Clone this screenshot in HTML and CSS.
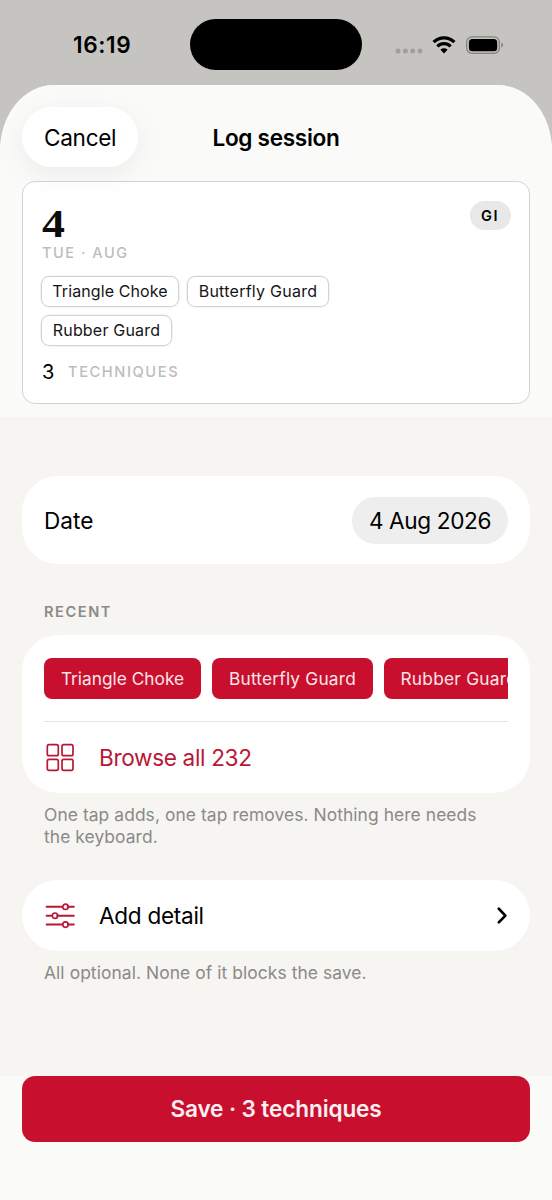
FILE: index.html
```html
<!DOCTYPE html>
<html lang="en">
<head>
<meta charset="utf-8">
<title>Log session</title>
<link rel="stylesheet" href="styles.css">
</head>
<body>
<div class="phone">
  <header class="status">
    <div class="time">16:19</div>
    <div class="island"></div>
    <div class="indicators">
      <svg width="110" height="22" viewBox="0 0 110 22">
        <g fill="#a09f9c"><circle cx="4" cy="17" r="2.5"/><circle cx="11.4" cy="17" r="2.5"/><circle cx="18.7" cy="17" r="2.5"/><circle cx="26" cy="17" r="2.5"/></g>
        <g fill="none" stroke="#000" stroke-width="3.2"><path d="M39.6 8.2a14.6 14.6 0 0 1 20.8 0"/><path d="M43.4 12.5a9.2 9.2 0 0 1 13.2 0"/></g>
        <path d="M50 19.4l-3.6-3.6a5.2 5.2 0 0 1 7.2 0z"/>
        <rect x="72.6" y="2.8" width="32.8" height="16.6" rx="5.4" fill="none" stroke="#82817f" stroke-width="1.3"/>
        <rect x="74.9" y="5" width="28.3" height="12.2" rx="3.5"/>
        <path d="M107.3 8.6c2.4 1 2.4 4 0 5z" fill="#82817f"/>
      </svg>
    </div>
  </header>
  <main class="sheet">
    <section class="top">
      <div class="navbar">
        <div class="cancel"><span class="t-cancel">Cancel</span></div>
        <h1 class="title"><span class="t-title">Log session</span></h1>
      </div>
      <article class="card">
        <div class="card-head">
          <div class="day">4</div>
          <div class="badge"><span class="t-gi">GI</span></div>
        </div>
        <div class="month"><span class="t-month">TUE · AUG</span></div>
        <div class="chips">
          <div class="chip"><span>Triangle Choke</span></div>
          <div class="chip chip-butterfly"><span>Butterfly Guard</span></div>
          <div class="chip chip-rubber"><span>Rubber Guard</span></div>
        </div>
        <div class="count"><b>3</b><span class="t-tech">TECHNIQUES</span></div>
      </article>
    </section>
    <section class="form">
      <div class="group date-row">
        <span class="t-date">Date</span>
        <div class="date-pill"><span class="t-pill">4 Aug 2026</span></div>
      </div>
      <h2 class="label"><span class="t-recent">RECENT</span></h2>
      <div class="group recent">
        <div class="tags">
          <div class="tag"><span>Triangle Choke</span></div>
          <div class="tag tag-butterfly"><span>Butterfly Guard</span></div>
          <div class="tag tag-rubber"><span>Rubber Guard</span></div>
        </div>
        <div class="browse">
          <svg class="row-icon" width="32" height="32" viewBox="0 0 32 32" fill="none" stroke="#b91736" stroke-width="1.7">
            <rect x="3.3" y="2.7" width="11" height="11" rx="1.8"/><rect x="18" y="2.7" width="11" height="11" rx="1.8"/>
            <rect x="3.3" y="17.4" width="11" height="11" rx="1.8"/><rect x="18" y="17.4" width="11" height="11" rx="1.8"/>
          </svg>
          <span class="t-browse">Browse all 232</span>
        </div>
      </div>
      <p class="note"><span class="t-note1">One tap adds, one tap removes. Nothing here needs</span><br><span class="t-note2">the keyboard.</span></p>
      <div class="group detail">
        <svg class="row-icon" width="32" height="32" viewBox="0 0 32 32" fill="none" stroke="#b91736" stroke-width="2" stroke-linecap="round">
          <path d="M2.6 6.8h15.2M23.8 6.8h6M2.6 15.7h4.6M13.2 15.7h16.6M2.6 24.6h15.2M23.8 24.6h6"/>
          <g stroke-width="1.7"><circle cx="21.5" cy="6.8" r="2.7"/><circle cx="11" cy="15.7" r="2.7"/><circle cx="21.5" cy="24.6" r="2.7"/></g>
        </svg>
        <span class="t-detail">Add detail</span>
        <svg class="chevron" width="12" height="20" viewBox="0 0 12 20" fill="none" stroke="#000" stroke-width="2.7" stroke-linecap="round" stroke-linejoin="round"><path d="M2.8 2.8l6.6 6.8-6.6 6.8"/></svg>
      </div>
      <p class="note last"><span class="t-note3">All optional. None of it blocks the save.</span></p>
    </section>
    <footer class="bottom">
      <div class="save"><span class="t-save">Save · 3 techniques</span></div>
    </footer>
  </main>
</div>
</body>
</html>
```
FILE: styles.css
```css
* { box-sizing: border-box; }
body { margin: 0; background: #c6c4c0; color: #000; font: 22.6px/28px Inter, "Liberation Sans", sans-serif; }
span { white-space: nowrap; }
svg { display: block; flex: none; }
h1, h2, p { margin: 0; font: inherit; }
.phone { width: 552px; height: 1200px; overflow: hidden; display: flex; flex-direction: column; }

.status { height: 85px; flex: none; display: grid; grid-template-columns: 190px 172px 190px; padding-top: 19px; }
.time { padding: 12px 0 0 73px; font-size: 22.6px; font-weight: 600; letter-spacing: .6px; }
.island { height: 51px; border-radius: 26px; background: #000; }
.indicators { padding: 15px 0 0 32px; }

.sheet { flex: 1; display: flex; flex-direction: column; background: #f6f5f1; border-radius: 54px 54px 0 0 / 66px 66px 0 0; overflow: hidden; }
.top { height: 332px; flex: none; background: #fafaf8; padding: 22px 22px 0; }
.navbar { height: 60px; display: grid; grid-template-columns: 116px 1fr 116px; align-items: center; }
.cancel { height: 60px; border-radius: 30px; background: #fff; box-shadow: 0 7px 28px rgba(0,0,0,.06); display: flex; align-items: center; padding: 2px 0 0 22px; }
.title { text-align: center; font-weight: 600; padding-top: 2px; }
.t-cancel { letter-spacing: -.3px; }
.t-title { letter-spacing: -.3px; }

.card { height: 223px; margin-top: 14px; border: 1px solid #d3d3d3; border-radius: 13px; background: #fff; padding: 19px 18px 0; }
.card-head { display: flex; justify-content: space-between; height: 42px; }
.day { margin-left: 1px; font: bold 41px/44px "Liberation Serif", serif; color: #0c0c0c; transform: scaleX(1.12); transform-origin: left; }
.badge { width: 41px; height: 29px; border-radius: 15px; background: #e8e8e8; display: flex; align-items: center; padding-left: 11px; font-size: 14.6px; font-weight: 600; }
.t-gi { letter-spacing: 1.6px; }
.month { height: 20px; margin-left: 1px; font-size: 14.6px; font-weight: 500; line-height: 20px; color: #bdbdbd; }
.t-month { letter-spacing: 1.5px; }
.chips { display: flex; flex-wrap: wrap; gap: 8px; margin-top: 13px; font-size: 16px; line-height: 28px; color: #151515; letter-spacing: .1px; }
.chip { width: 138px; height: 31px; border: 1px solid #d3d3d3; border-radius: 8px; display: flex; align-items: flex-start; justify-content: center; box-shadow: 0 0 0 .3px #d8d8d8; }
.chip-butterfly { width: 142px; margin-right: 100px; letter-spacing: .26px; }
.chip-rubber { width: 131px; letter-spacing: .2px; }
.count { display: flex; align-items: center; height: 28px; margin: 12px 0 0 1px; }
.count b { width: 26px; font-size: 20px; font-weight: 400; }
.t-tech { font-size: 14.6px; font-weight: 500; color: #bdbdbd; letter-spacing: 1.6px; }

.form { height: 659px; flex: none; padding: 59px 22px 0; }
.group { background: #fff; border-radius: 36px; }
.date-row { height: 88px; padding: 0 22px; display: flex; align-items: center; justify-content: space-between; }
.t-date { padding-top: 2px; }
.date-pill { width: 156px; height: 47px; padding-top: 1px; border-radius: 24px; background: #eee; display: flex; align-items: center; justify-content: center; }
.t-pill { letter-spacing: -.38px; }
.label { margin: 38px 0 0 22px; height: 20px; font-size: 14.6px; line-height: 20px; font-weight: 600; color: #8a8a87; }
.t-recent { letter-spacing: 1.55px; }
.recent { height: 158px; margin-top: 13px; padding: 23px 22px 0; }
.tags { display: flex; gap: 11px; overflow: hidden; height: 41px; font-size: 17.3px; color: #fbe4e9; }
.tag { width: 157px; height: 41px; flex: none; border-radius: 8px; background: #c8102e; display: flex; align-items: center; justify-content: center; }
.tag-butterfly { width: 161px; letter-spacing: .2px; }
.tag-rubber { width: 150px; letter-spacing: .25px; justify-content: flex-start; padding-left: 16.5px; }
.browse { margin-top: 22px; border-top: 1px solid #e4e4e4; height: 73px; display: flex; align-items: center; color: #b91736; }
.t-browse { letter-spacing: -.35px; }
.row-icon { margin-right: 23px; }
.note { padding: 11px 22px 0; font-size: 17.4px; line-height: 22px; color: #8a8a87; letter-spacing: .08px; }
.detail { height: 71px; margin-top: 32px; padding: 1px 22px 0; display: flex; align-items: center; border-radius: 35.5px; }
.t-detail { letter-spacing: -.3px; }
.chevron { margin-left: auto; }

.bottom { flex: 1; background: #fafaf8; padding: 0 22px; }
.save { height: 66px; border-radius: 13px; background: #c8102e; color: #fdeef1; font-weight: 600; display: flex; align-items: center; justify-content: center; letter-spacing: -.13px; }
```
